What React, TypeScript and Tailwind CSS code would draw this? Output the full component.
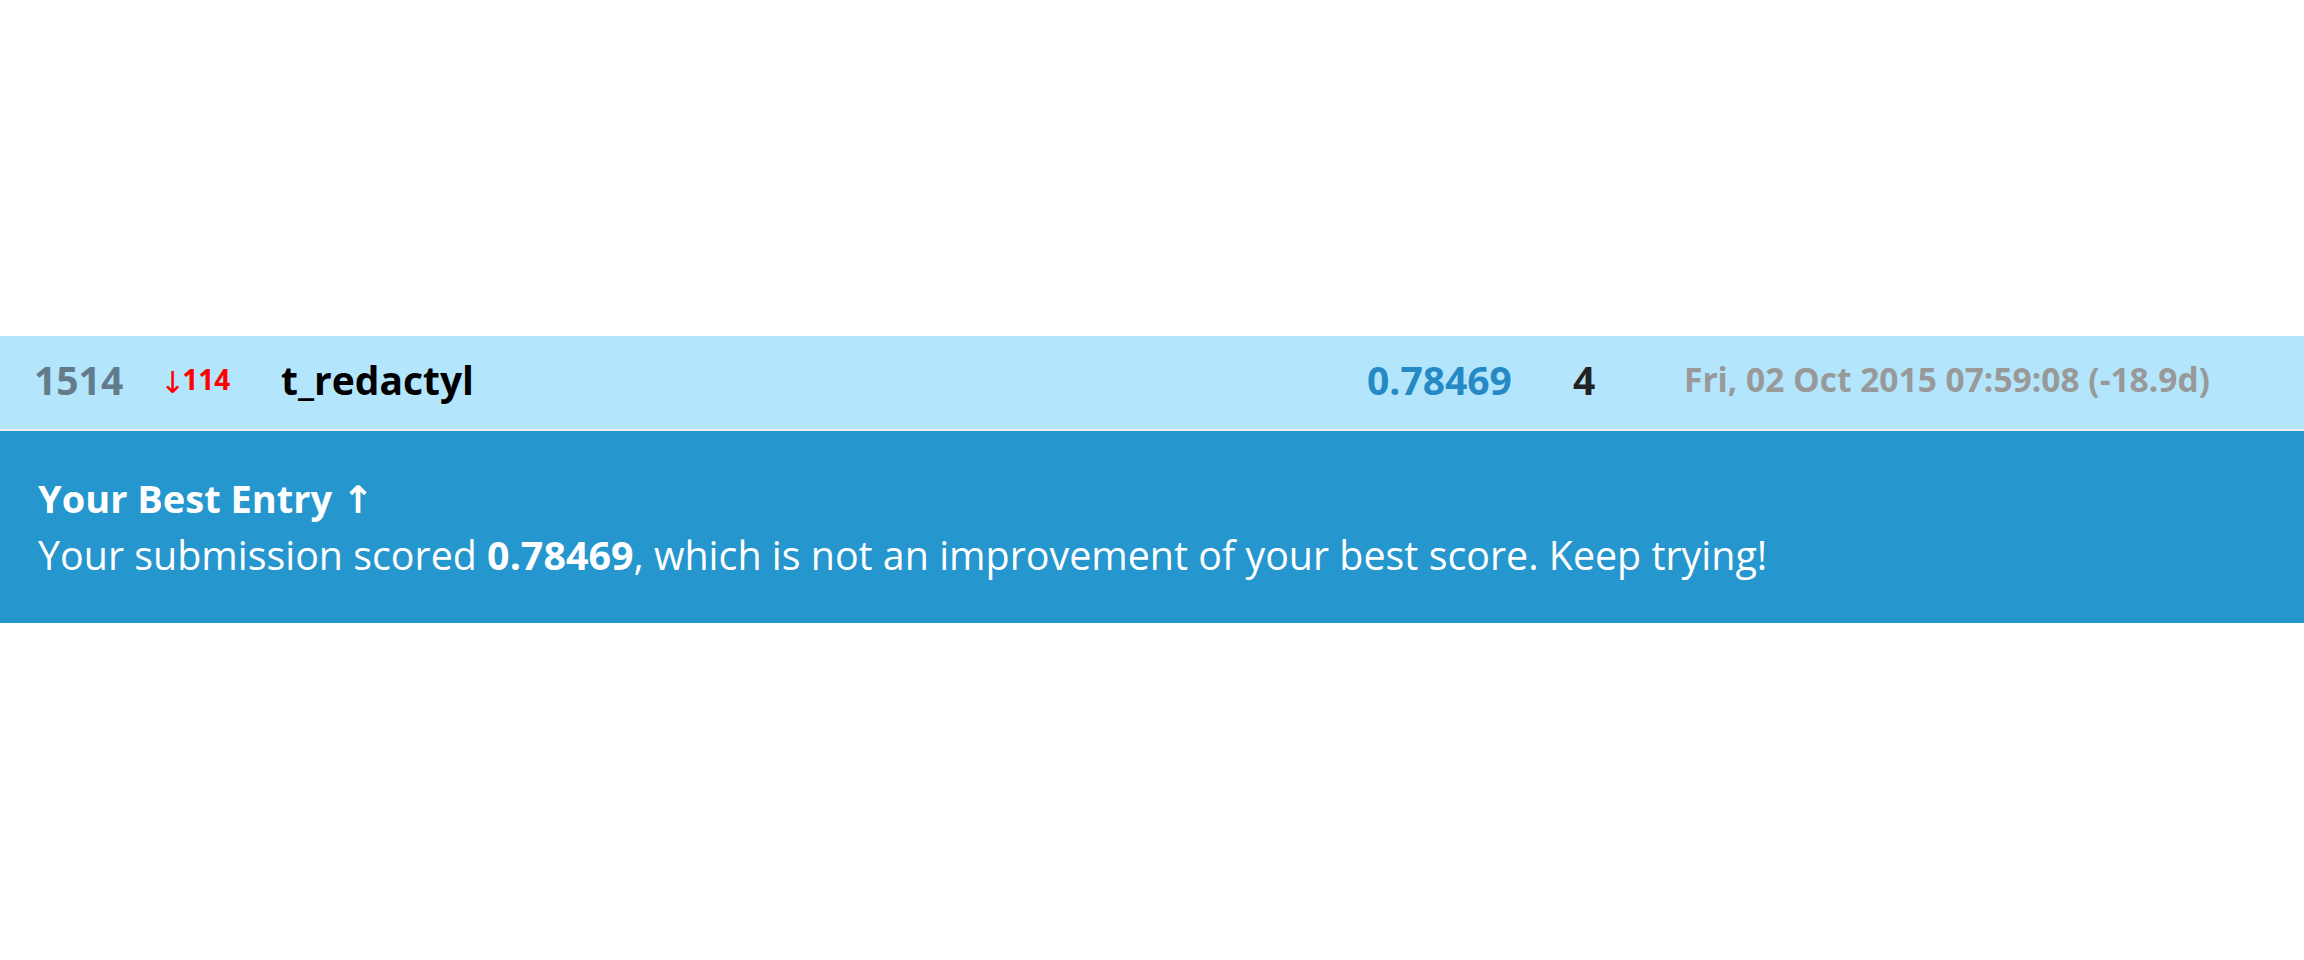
export default function App() {
  const font = { fontFamily: '"Open Sans", "DejaVu Sans", sans-serif' };
  return (
    <div className="w-[2304px] h-[960px] bg-white" style={font}>
      <div className="h-[336px]" />
      <div className="flex items-center h-[95px] bg-[#b3e5fc] pl-[34px] pb-[6px] border-b-2 border-[#eeeeee]">
        <div className="w-[128px] text-[39px] leading-none font-bold text-[#637b8b]">1514</div>
        <div className="w-[119px] flex items-baseline text-[#ff0000]">
          <span className="text-[30px] leading-none relative top-[3px] -ml-[2px] -mr-[3px]" style={{ fontFamily: '"DejaVu Sans", sans-serif' }}>↓</span>
          <span className="text-[28px] leading-none font-bold">114</span>
        </div>
        <div className="w-[1086px] text-[39px] leading-none font-bold text-black">t_redactyl</div>
        <div className="w-[206px] text-[39px] leading-none font-bold text-[#2589c6]">0.78469</div>
        <div className="w-[111px] text-[39px] leading-none font-bold text-[#222222]">4</div>
        <div className="text-[33.5px] leading-none font-bold text-[#999999]">Fri, 02 Oct 2015 07:59:08 (-18.9d)</div>
      </div>
      <div className="bg-[#2596ce] pl-[38px] pt-[39px] pb-[39px] text-white leading-[57px]">
        <div className="font-bold text-[38px]">Your Best Entry ↑</div>
        <div className="text-[39.4px]">
          Your submission scored <span className="font-bold">0.78469</span>, which is not an improvement of your best score. Keep trying!
        </div>
      </div>
    </div>
  );
}
